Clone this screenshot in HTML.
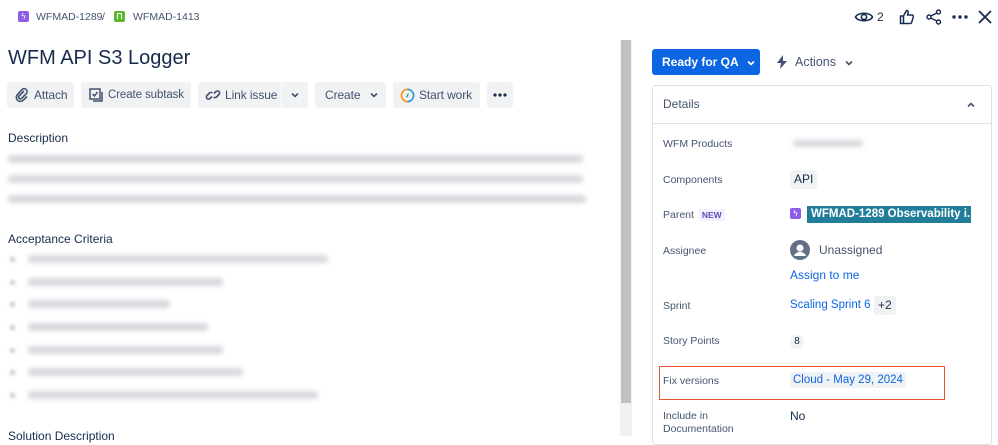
<!DOCTYPE html>
<html><head><meta charset="utf-8"><style>
*{margin:0;padding:0;box-sizing:border-box}
body{width:998px;height:436px;overflow:hidden;background:#fff;font-family:"Liberation Sans",sans-serif;color:#172b4d;position:relative}
.a{position:absolute;white-space:nowrap}
.btn{position:absolute;top:82px;height:26px;background:#f1f2f4;border-radius:3px;font-size:12px;color:#42526e;display:flex;align-items:center;padding-left:7px;white-space:nowrap;letter-spacing:-.1px}
.btn svg{margin-right:4px;flex:none}
.lbl{position:absolute;left:663px;font-size:10.5px;color:#44546f;white-space:nowrap}
.val{position:absolute;left:790px;font-size:12px;color:#172b4d;white-space:nowrap}
.blur{position:absolute;height:8px;background:#c9ccd2;filter:blur(2.5px);border-radius:3px;opacity:.75}
.dot{position:absolute;left:10px;width:5px;height:5px;background:#c0c4cc;filter:blur(1.5px);border-radius:50%}
.chev{display:inline-block;vertical-align:middle}
</style></head><body>
<!-- breadcrumb -->
<div class="a" style="left:18px;top:11px;width:11px;height:11px;background:#8f5ce8;border-radius:2px;color:#fff;font-size:8px;text-align:center;line-height:11px">ϟ</div>
<div class="a" style="left:36px;top:11px;font-size:10.5px;color:#44546f">WFMAD-1289</div>
<div class="a" style="left:102px;top:11px;font-size:10.5px;color:#44546f">/</div>
<div class="a" style="left:114px;top:11px;width:11px;height:11px;background:#5cb82e;border-radius:2px"><div style="position:absolute;left:3px;top:2px;width:5px;height:6px;border:1.5px solid #fff;border-bottom:none"></div></div>
<div class="a" style="left:133px;top:11px;font-size:10.5px;color:#44546f">WFMAD-1413</div>
<div class="a" style="left:8px;top:47px;font-size:20px;color:#172b4d">WFM API S3 Logger</div>
<!-- buttons -->
<div class="btn" style="left:7px;width:67px"><svg width="16" height="16" viewBox="0 0 16 16"><path d="M10 4L5 9a1.8 1.8 0 0 0 2.5 2.5l5-5a3 3 0 0 0-4.2-4.2L3.5 7.5a4 4 0 0 0 5.7 5.7L13 9.5" fill="none" stroke="#42526e" stroke-width="1.6"/></svg>Attach</div>
<div class="btn" style="left:81px;width:110px;font-size:11.5px"><svg width="16" height="16" viewBox="0 0 16 16"><rect x="2" y="2" width="10" height="10" fill="none" stroke="#42526e" stroke-width="1.5"/><path d="M4.5 7l2 2 3-4M14 5v9H5" fill="none" stroke="#42526e" stroke-width="1.5"/></svg>Create subtask</div>
<div class="btn" style="left:198px;width:83px;border-radius:3px 0 0 3px"><svg width="16" height="16" viewBox="0 0 16 16"><path d="M7 9.5l-2 2a2.1 2.1 0 0 1-3-3l2.5-2.5a2.1 2.1 0 0 1 3 0M9 6.5l2-2a2.1 2.1 0 0 1 3 3L11.5 10a2.1 2.1 0 0 1-3 0" fill="none" stroke="#42526e" stroke-width="1.6"/></svg>Link issue</div>
<div class="btn" style="left:282px;width:26px;border-radius:0 3px 3px 0;padding-left:9px"><svg width="8" height="6" viewBox="0 0 8 6"><path d="M1 1.5l3 3 3-3" fill="none" stroke="#42526e" stroke-width="1.6"/></svg></div>
<div class="btn" style="left:315px;width:71px;padding-left:10px">Create<svg style="margin-left:10px" width="8" height="6" viewBox="0 0 8 6"><path d="M1 1.5l3 3 3-3" fill="none" stroke="#42526e" stroke-width="1.6"/></svg></div>
<div class="btn" style="left:393px;width:87px"><svg width="15" height="15" viewBox="0 0 16 16"><circle cx="8" cy="8" r="6.5" fill="none" stroke="#ff8b00" stroke-width="1.6"/><path d="M8 1.5a6.5 6.5 0 0 1 6.5 6.5A6.5 6.5 0 0 1 8 14.5" fill="none" stroke="#1d9aea" stroke-width="1.6"/><path d="M7 10l2-4" stroke="#22a06b" stroke-width="1.4"/></svg>Start work</div>
<div class="btn" style="left:487px;width:26px;padding-left:6px"><svg width="14" height="4" viewBox="0 0 14 4"><circle cx="2" cy="2" r="1.6" fill="#172b4d"/><circle cx="7" cy="2" r="1.6" fill="#172b4d"/><circle cx="12" cy="2" r="1.6" fill="#172b4d"/></svg></div>
<!-- description -->
<div class="a" style="left:8px;top:131px;font-size:12px">Description</div>
<div class="blur" style="left:8px;top:155px;width:575px"></div>
<div class="blur" style="left:8px;top:175px;width:575px"></div>
<div class="blur" style="left:8px;top:195px;width:578px"></div>
<div class="a" style="left:8px;top:232px;font-size:12px">Acceptance Criteria</div>
<div class="dot" style="top:257px"></div><div class="blur" style="left:28px;top:255px;width:300px"></div>
<div class="dot" style="top:280px"></div><div class="blur" style="left:28px;top:278px;width:195px"></div>
<div class="dot" style="top:302px"></div><div class="blur" style="left:28px;top:300px;width:142px"></div>
<div class="dot" style="top:325px"></div><div class="blur" style="left:28px;top:323px;width:180px"></div>
<div class="dot" style="top:348px"></div><div class="blur" style="left:28px;top:346px;width:195px"></div>
<div class="dot" style="top:370px"></div><div class="blur" style="left:28px;top:368px;width:215px"></div>
<div class="dot" style="top:393px"></div><div class="blur" style="left:28px;top:391px;width:290px"></div>
<div class="a" style="left:8px;top:429px;font-size:12px">Solution Description</div>
<!-- scrollbar -->
<div class="a" style="left:620px;top:40px;width:12px;height:396px;background:#f1f1f1"></div>
<div class="a" style="left:621px;top:40px;width:10px;height:363px;background:#c1c1c1"></div>
<!-- top right icons -->
<svg class="a" style="left:854px;top:9px" width="20" height="16" viewBox="0 0 20 16"><path d="M1.5 8C4 3 16 3 18.5 8 16 13 4 13 1.5 8z" fill="none" stroke="#172b4d" stroke-width="1.6"/><circle cx="10" cy="8" r="2.6" fill="none" stroke="#172b4d" stroke-width="1.6"/></svg>
<div class="a" style="left:877px;top:10px;font-size:12px">2</div>
<svg class="a" style="left:899px;top:9px" width="16" height="16" viewBox="0 0 16 16"><path d="M1.5 7h3v7.5h-3zM4.5 7l3-5.5c1.3 0 2 1 1.6 2.3L8.6 6H13c1 0 1.6.9 1.3 1.8l-1.6 5.5c-.2.7-.8 1.2-1.5 1.2H4.5" fill="none" stroke="#172b4d" stroke-width="1.5"/></svg>
<svg class="a" style="left:926px;top:9px" width="16" height="16" viewBox="0 0 16 16"><circle cx="12.5" cy="3" r="2" fill="none" stroke="#172b4d" stroke-width="1.4"/><circle cx="3" cy="8" r="2" fill="none" stroke="#172b4d" stroke-width="1.4"/><circle cx="12.5" cy="13" r="2" fill="none" stroke="#172b4d" stroke-width="1.4"/><path d="M4.8 7l6-3M4.8 9l6 3" stroke="#172b4d" stroke-width="1.4"/></svg>
<svg class="a" style="left:952px;top:15px" width="16" height="4" viewBox="0 0 16 4"><circle cx="2" cy="2" r="1.7" fill="#172b4d"/><circle cx="8" cy="2" r="1.7" fill="#172b4d"/><circle cx="14" cy="2" r="1.7" fill="#172b4d"/></svg>
<svg class="a" style="left:978px;top:10px" width="14" height="14" viewBox="0 0 14 14"><path d="M1 1l12 12M13 1L1 13" stroke="#172b4d" stroke-width="1.8"/></svg>
<!-- status -->
<div class="a" style="left:652px;top:49px;width:108px;height:26px;background:#0c66e4;border-radius:3px;color:#fff;font-size:12px;font-weight:bold;line-height:26px;padding-left:10px">Ready for QA<svg style="margin-left:8px;vertical-align:middle" width="8" height="6" viewBox="0 0 8 6"><path d="M1 1.5l3 3 3-3" fill="none" stroke="#fff" stroke-width="1.6"/></svg></div>
<svg class="a" style="left:776px;top:55px" width="12" height="14" viewBox="0 0 12 14"><path d="M7 0L1 8h4l-1 6 7-8H7z" fill="#42526e"/></svg>
<div class="a" style="left:795px;top:55px;font-size:12.5px;color:#42526e">Actions<svg style="margin-left:9px;vertical-align:middle" width="8" height="6" viewBox="0 0 8 6"><path d="M1 1.5l3 3 3-3" fill="none" stroke="#42526e" stroke-width="1.6"/></svg></div>
<!-- details panel -->
<div class="a" style="left:652px;top:85px;width:340px;height:360px;border:1px solid #dfe1e6;border-radius:3px"></div>
<div class="a" style="left:652px;top:123px;width:340px;height:1px;background:#dfe1e6"></div>
<div class="a" style="left:663px;top:97px;font-size:12px;color:#44546f">Details</div>
<svg class="a" style="left:967px;top:102px" width="8" height="6" viewBox="0 0 8 6"><path d="M1 4.5l3-3 3 3" fill="none" stroke="#44546f" stroke-width="1.6"/></svg>
<div class="lbl" style="top:138px">WFM Products</div>
<div class="blur" style="left:793px;top:140px;width:70px;height:7px"></div>
<div class="lbl" style="top:174px">Components</div>
<div class="a" style="left:790px;top:170px;height:19px;padding:0 4px;background:#f1f2f4;border-radius:3px;font-size:12px;line-height:19px">API</div>
<div class="lbl" style="top:209px">Parent <span style="background:#f3f0ff;color:#5e4db2;font-size:8.5px;font-weight:bold;padding:1px 3px;margin-left:2px">NEW</span></div>
<div class="a" style="left:790px;top:208px;width:11px;height:11px;background:#8f5ce8;border-radius:2px;color:#fff;font-size:8px;text-align:center;line-height:11px">ϟ</div>
<div class="a" style="left:807px;top:206px;width:164px;height:17px;background:#227d9b;color:#fff;font-size:11.5px;font-weight:bold;line-height:17px;padding-left:4px;overflow:hidden">WFMAD-1289 Observability i...</div>
<div class="lbl" style="top:245px">Assignee</div>
<svg class="a" style="left:790px;top:240px" width="20" height="20" viewBox="0 0 20 20"><circle cx="10" cy="10" r="10" fill="#626f86"/><circle cx="10" cy="8" r="3.5" fill="#fff"/><path d="M4 16c1-3 3.5-4 6-4s5 1 6 4z" fill="#fff"/></svg>
<div class="val" style="left:819px;top:243px;color:#44546f">Unassigned</div>
<div class="val" style="top:268px;color:#0c66e4">Assign to me</div>
<div class="lbl" style="top:300px">Sprint</div>
<div class="val" style="top:299px;color:#0c66e4;font-size:11.5px">Scaling Sprint 6</div>
<div class="a" style="left:874px;top:296px;height:19px;padding:0 4px;background:#f1f2f4;border-radius:3px;font-size:12px;line-height:19px">+2</div>
<div class="lbl" style="top:335px">Story Points</div>
<div class="a" style="left:790px;top:335px;width:14px;height:14px;background:#f1f2f4;border-radius:7px;font-size:10px;text-align:center;line-height:14px">8</div>
<div class="a" style="left:659px;top:366px;width:286px;height:34px;border:1.5px solid #e8552a"></div>
<div class="lbl" style="top:375px">Fix versions</div>
<div class="a" style="left:790px;top:372px;height:16px;padding:0 3px;background:#f1f2f4;border-radius:3px;font-size:11.5px;line-height:16px;color:#0c66e4">Cloud - May 29, 2024</div>
<div class="lbl" style="top:410px;line-height:13px">Include in<br>Documentation</div>
<div class="val" style="top:409px">No</div>
</body></html>
